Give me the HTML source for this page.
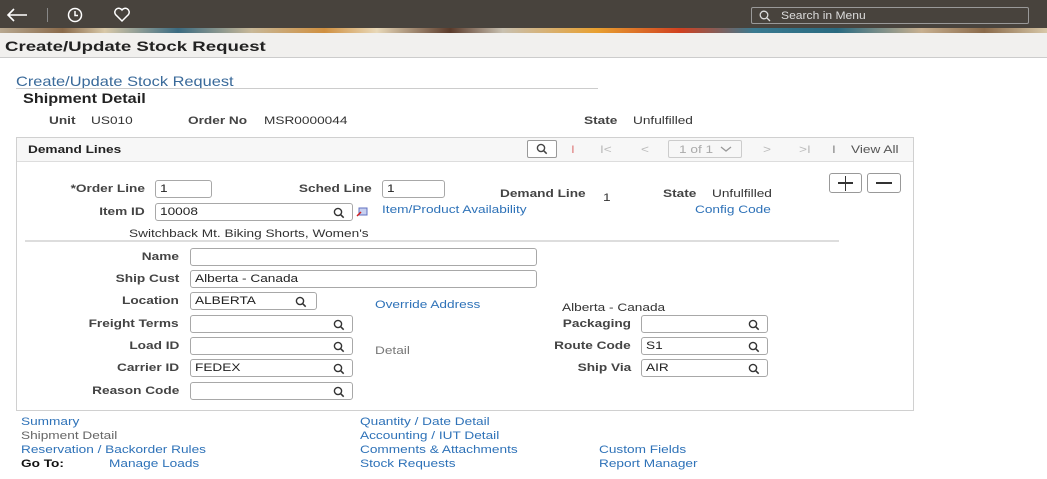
<!DOCTYPE html>
<html><head><meta charset="utf-8"><style>
*{margin:0;padding:0;box-sizing:border-box}
body{width:1047px;height:479px;overflow:hidden;background:#fff;font-family:"Liberation Sans",Arial,sans-serif;position:relative;color:#333}
.a{position:absolute}
.t{position:absolute;white-space:nowrap;transform:scaleX(1.24);transform-origin:0 0;font-size:11px;line-height:13px;margin-top:1px}
.r{position:absolute;white-space:nowrap;transform:scaleX(1.24);transform-origin:100% 0;font-size:11px;line-height:13px;font-weight:bold;color:#444;text-align:right;margin-top:1px}
.l{color:#2e72b8}
.b{font-weight:bold;color:#444}
.in{position:absolute;border:1px solid #a8a8a8;border-radius:3px;background:#fff;height:18px}
.in span{position:absolute;left:4px;top:2px;font-size:11px;color:#222;transform:scaleX(1.24);transform-origin:0 0;white-space:nowrap}
.q{position:absolute;right:7px;top:3px;width:12px;height:12px}
</style></head><body>
<div class="a" style="left:0;top:0;width:1047px;height:28px;background:#48433d"></div>
<div class="a" style="left:0;top:28px;width:1047px;height:5px;background:linear-gradient(90deg,#b8a890 0,#8a6a4a 6%,#d8c8a8 10%,#3a6a80 17%,#c8b898 24%,#d09040 31%,#e8d8b8 36%,#5a3a2a 43%,#c8c0b0 48%,#e8a030 57%,#d04020 65%,#3a7a90 72%,#2a6a80 80%,#c8b090 88%,#8a6a4a 94%,#d8c8a8 100%)"></div>
<svg class="a" style="left:5px;top:7px" width="24" height="16" viewBox="0 0 24 16"><path d="M22 8H3M9 2L3 8l6 6" stroke="#fff" stroke-width="1.6" fill="none"/></svg>
<div class="a" style="left:47px;top:8px;width:1px;height:14px;background:#888"></div>
<svg class="a" style="left:67px;top:7px" width="16" height="16" viewBox="0 0 16 16"><circle cx="8" cy="8" r="6.5" stroke="#fff" stroke-width="1.5" fill="none"/><path d="M8 4v4.5h3" stroke="#fff" stroke-width="1.5" fill="none"/></svg>
<svg class="a" style="left:113px;top:7px" width="18" height="16" viewBox="0 0 18 16"><path d="M9 14L2.5 7.5A3.5 3.5 0 019 3a3.5 3.5 0 016.5 4.5z" stroke="#fff" stroke-width="1.5" fill="none"/></svg>
<div class="a" style="left:751px;top:7px;width:278px;height:17px;border:1px solid #999;border-radius:2px"></div>
<svg class="a" style="left:759px;top:10px" width="12" height="12" viewBox="0 0 12 12"><circle cx="5" cy="5" r="3.8" stroke="#ddd" stroke-width="1.3" fill="none"/><path d="M8 8l3 3" stroke="#ddd" stroke-width="1.3"/></svg>
<div class="t" style="left:781px;top:9px;color:#ddd;transform:scaleX(1.1)">Search in Menu</div>
<div class="a" style="left:0;top:33px;width:1047px;height:25px;background:#f1f0ee;border-bottom:1px solid #ccc"></div>
<div class="t" style="left:5px;top:37px;font-size:14px;line-height:16px;font-weight:bold;color:#222;transform:scaleX(1.33)">Create/Update Stock Request</div>

<div class="t" style="left:16px;top:72px;font-size:14px;line-height:16px;color:#3a6a9a;transform:scaleX(1.17)">Create/Update Stock Request</div>
<div class="a" style="left:16px;top:88px;width:582px;height:1px;background:#ccc"></div>
<div class="t" style="left:23px;top:89px;font-size:14px;line-height:16px;font-weight:bold;color:#222;transform:scaleX(1.16)">Shipment Detail</div>

<div class="t b" style="left:49px;top:114px">Unit</div>
<div class="t" style="left:91px;top:114px">US010</div>
<div class="t b" style="left:188px;top:114px">Order No</div>
<div class="t" style="left:264px;top:114px">MSR0000044</div>
<div class="t b" style="left:584px;top:114px">State</div>
<div class="t" style="left:633px;top:114px">Unfulfilled</div>

<div class="a" style="left:16px;top:137px;width:898px;height:274px;border:1px solid #d0d0d0"></div>
<div class="a" style="left:17px;top:138px;width:896px;height:24px;background:#f7f7f7;border-bottom:1px solid #ddd"></div>
<div class="t b" style="left:28px;top:143px;color:#222">Demand Lines</div>
<div class="a" style="left:527px;top:140px;width:30px;height:18px;border:1px solid #999;border-radius:2px;background:#fff"></div>
<svg class="a" style="left:536px;top:143px" width="12" height="12" viewBox="0 0 12 12"><circle cx="5" cy="5" r="3.6" stroke="#444" stroke-width="1.4" fill="none"/><path d="M7.7 7.7l3 3" stroke="#444" stroke-width="1.5"/></svg>
<div class="t" style="left:571px;top:143px;color:#e08080">I</div>
<div class="t" style="left:600px;top:143px;color:#bbb">I&lt;</div>
<div class="t" style="left:641px;top:143px;color:#bbb">&lt;</div>
<div class="a" style="left:668px;top:140px;width:74px;height:18px;border:1px solid #ccc;border-radius:2px"></div>
<div class="t" style="left:679px;top:143px;color:#aaa">1 of 1</div>
<svg class="a" style="left:720px;top:146px" width="12" height="7" viewBox="0 0 12 7"><path d="M1 1l5 4 5-4" stroke="#999" stroke-width="1.3" fill="none"/></svg>
<div class="t" style="left:763px;top:143px;color:#bbb">&gt;</div>
<div class="t" style="left:799px;top:143px;color:#bbb">&gt;I</div>
<div class="t" style="left:832px;top:143px;color:#888">I</div>
<div class="t" style="left:851px;top:143px;color:#555">View All</div>

<div class="r" style="right:902px;top:182px">*Order Line</div>
<div class="in" style="left:155px;top:180px;width:57px"><span>1</span></div>
<div class="r" style="right:675px;top:182px">Sched Line</div>
<div class="in" style="left:382px;top:180px;width:63px"><span>1</span></div>
<div class="t b" style="left:500px;top:187px">Demand Line</div>
<div class="t" style="left:603px;top:191px">1</div>
<div class="t b" style="left:663px;top:187px">State</div>
<div class="t" style="left:712px;top:187px">Unfulfilled</div>
<div class="a" style="left:829px;top:173px;width:33px;height:20px;border:1px solid #999;border-radius:3px"></div>
<div class="a" style="left:838px;top:182px;width:15px;height:1.5px;background:#333"></div>
<div class="a" style="left:844.8px;top:175.5px;width:1.5px;height:15px;background:#333"></div>
<div class="a" style="left:867px;top:173px;width:34px;height:20px;border:1px solid #999;border-radius:3px"></div>
<div class="a" style="left:876px;top:182px;width:16px;height:1.5px;background:#333"></div>

<div class="r" style="right:902px;top:205px">Item ID</div>
<div class="in" style="left:155px;top:203px;width:198px"><span>10008</span><svg class="q" viewBox="0 0 12 12"><circle cx="5" cy="5" r="3.6" stroke="#333" stroke-width="1.4" fill="none"/><path d="M7.7 7.7l3 3" stroke="#333" stroke-width="1.5"/></svg></div>
<svg class="a" style="left:356px;top:207px" width="12" height="10" viewBox="0 0 12 10"><rect x="3" y="1" width="8" height="7" fill="#c8d0f0" stroke="#6070c0"/><path d="M1 9l4-4" stroke="#d02020" stroke-width="1.5"/></svg>
<div class="t l" style="left:382px;top:203px">Item/Product Availability</div>
<div class="t l" style="left:695px;top:203px">Config Code</div>
<div class="t" style="left:129px;top:227px">Switchback Mt. Biking Shorts, Women's</div>
<div class="a" style="left:25px;top:240px;width:814px;height:2px;background:#ddd"></div>

<div class="r" style="right:868px;top:250px">Name</div>
<div class="in" style="left:190px;top:248px;width:347px"></div>
<div class="r" style="right:868px;top:272px">Ship Cust</div>
<div class="in" style="left:190px;top:270px;width:347px"><span>Alberta - Canada</span></div>
<div class="r" style="right:868px;top:294px">Location</div>
<div class="in" style="left:190px;top:292px;width:127px"><span>ALBERTA</span><svg class="q" style="right:9px" viewBox="0 0 12 12"><circle cx="5" cy="5" r="3.6" stroke="#333" stroke-width="1.4" fill="none"/><path d="M7.7 7.7l3 3" stroke="#333" stroke-width="1.5"/></svg></div>
<div class="t l" style="left:375px;top:298px">Override Address</div>
<div class="t" style="left:562px;top:301px">Alberta - Canada</div>

<div class="r" style="right:868px;top:317px">Freight Terms</div>
<div class="in" style="left:190px;top:315px;width:163px"><svg class="q" viewBox="0 0 12 12"><circle cx="5" cy="5" r="3.6" stroke="#333" stroke-width="1.4" fill="none"/><path d="M7.7 7.7l3 3" stroke="#333" stroke-width="1.5"/></svg></div>
<div class="r" style="right:416px;top:317px">Packaging</div>
<div class="in" style="left:641px;top:315px;width:127px"><svg class="q" viewBox="0 0 12 12"><circle cx="5" cy="5" r="3.6" stroke="#333" stroke-width="1.4" fill="none"/><path d="M7.7 7.7l3 3" stroke="#333" stroke-width="1.5"/></svg></div>

<div class="r" style="right:868px;top:339px">Load ID</div>
<div class="in" style="left:190px;top:337px;width:163px"><svg class="q" viewBox="0 0 12 12"><circle cx="5" cy="5" r="3.6" stroke="#333" stroke-width="1.4" fill="none"/><path d="M7.7 7.7l3 3" stroke="#333" stroke-width="1.5"/></svg></div>
<div class="t" style="left:375px;top:344px;color:#777">Detail</div>
<div class="r" style="right:416px;top:339px">Route Code</div>
<div class="in" style="left:641px;top:337px;width:127px"><span>S1</span><svg class="q" viewBox="0 0 12 12"><circle cx="5" cy="5" r="3.6" stroke="#333" stroke-width="1.4" fill="none"/><path d="M7.7 7.7l3 3" stroke="#333" stroke-width="1.5"/></svg></div>

<div class="r" style="right:868px;top:361px">Carrier ID</div>
<div class="in" style="left:190px;top:359px;width:163px"><span>FEDEX</span><svg class="q" viewBox="0 0 12 12"><circle cx="5" cy="5" r="3.6" stroke="#333" stroke-width="1.4" fill="none"/><path d="M7.7 7.7l3 3" stroke="#333" stroke-width="1.5"/></svg></div>
<div class="r" style="right:416px;top:361px">Ship Via</div>
<div class="in" style="left:641px;top:359px;width:127px"><span>AIR</span><svg class="q" viewBox="0 0 12 12"><circle cx="5" cy="5" r="3.6" stroke="#333" stroke-width="1.4" fill="none"/><path d="M7.7 7.7l3 3" stroke="#333" stroke-width="1.5"/></svg></div>

<div class="r" style="right:868px;top:384px">Reason Code</div>
<div class="in" style="left:190px;top:382px;width:163px"><svg class="q" viewBox="0 0 12 12"><circle cx="5" cy="5" r="3.6" stroke="#333" stroke-width="1.4" fill="none"/><path d="M7.7 7.7l3 3" stroke="#333" stroke-width="1.5"/></svg></div>

<div class="t l" style="left:21px;top:415px">Summary</div>
<div class="t" style="left:21px;top:429px;color:#666">Shipment Detail</div>
<div class="t l" style="left:21px;top:443px">Reservation / Backorder Rules</div>
<div class="t" style="left:21px;top:457px;font-weight:bold;color:#111">Go To:</div>
<div class="t l" style="left:109px;top:457px">Manage Loads</div>
<div class="t l" style="left:360px;top:415px">Quantity / Date Detail</div>
<div class="t l" style="left:360px;top:429px">Accounting / IUT Detail</div>
<div class="t l" style="left:360px;top:443px">Comments &amp; Attachments</div>
<div class="t l" style="left:360px;top:457px">Stock Requests</div>
<div class="t l" style="left:599px;top:443px">Custom Fields</div>
<div class="t l" style="left:599px;top:457px">Report Manager</div>
</body></html>
